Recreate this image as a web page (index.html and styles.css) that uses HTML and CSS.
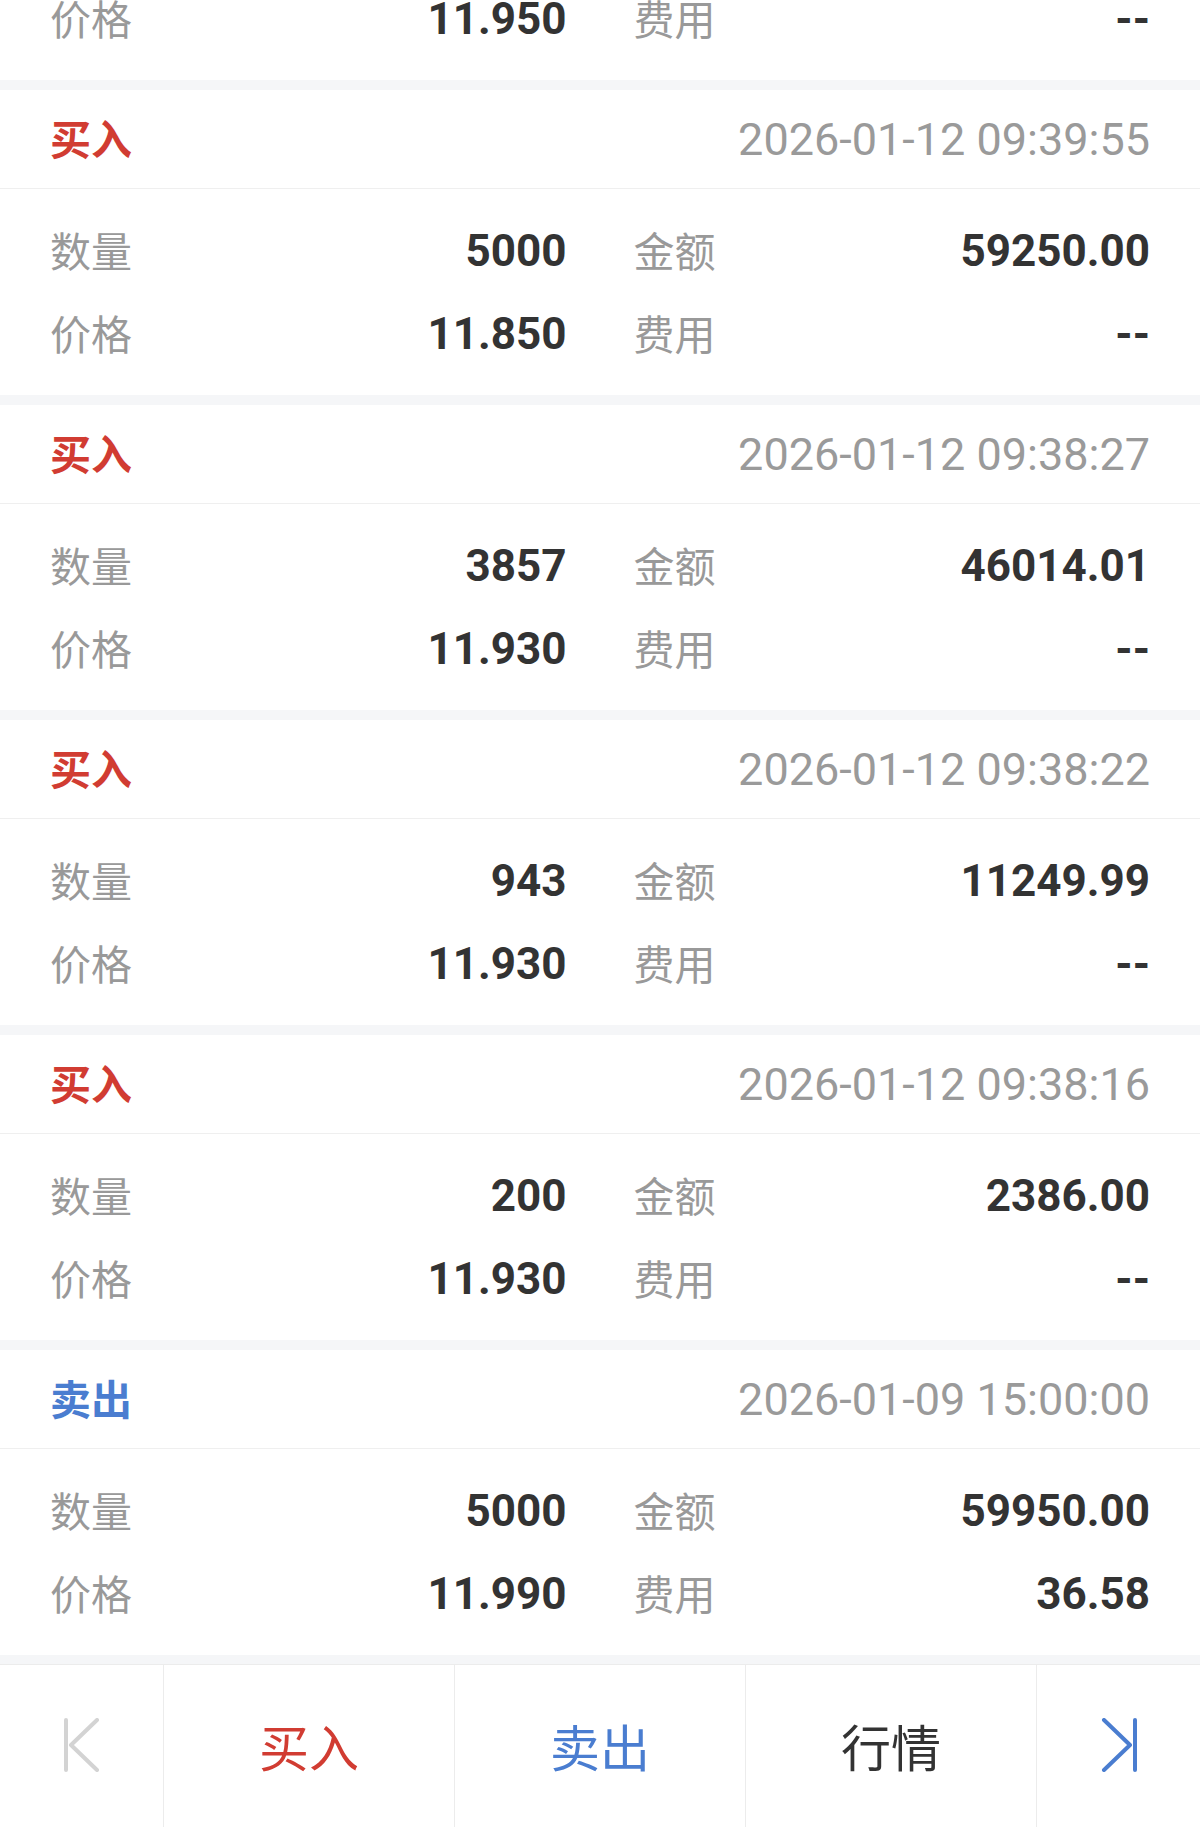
FILE: index.html
```html
<!DOCTYPE html>
<html lang="zh-CN">
<head>
<meta charset="utf-8">
<title>成交明细</title>
<link rel="stylesheet" href="styles.css">
</head>
<body>
<div class="viewport">
  <div class="list">
    <section class="card card-first">
      <div class="card-body card-body-partial">
        <div class="cell"><span class="label">价格</span><span class="value">11.950</span></div>
        <div class="cell"><span class="label">费用</span><span class="value">--</span></div>
      </div>
    </section>
    <section class="card">
      <div class="card-head"><span class="side buy">买入</span><span class="time">2026-01-12 09:39:55</span></div>
      <div class="card-body">
        <div class="cell"><span class="label">数量</span><span class="value">5000</span></div>
        <div class="cell"><span class="label">金额</span><span class="value">59250.00</span></div>
        <div class="cell"><span class="label">价格</span><span class="value">11.850</span></div>
        <div class="cell"><span class="label">费用</span><span class="value">--</span></div>
      </div>
    </section>
    <section class="card">
      <div class="card-head"><span class="side buy">买入</span><span class="time">2026-01-12 09:38:27</span></div>
      <div class="card-body">
        <div class="cell"><span class="label">数量</span><span class="value">3857</span></div>
        <div class="cell"><span class="label">金额</span><span class="value">46014.01</span></div>
        <div class="cell"><span class="label">价格</span><span class="value">11.930</span></div>
        <div class="cell"><span class="label">费用</span><span class="value">--</span></div>
      </div>
    </section>
    <section class="card">
      <div class="card-head"><span class="side buy">买入</span><span class="time">2026-01-12 09:38:22</span></div>
      <div class="card-body">
        <div class="cell"><span class="label">数量</span><span class="value">943</span></div>
        <div class="cell"><span class="label">金额</span><span class="value">11249.99</span></div>
        <div class="cell"><span class="label">价格</span><span class="value">11.930</span></div>
        <div class="cell"><span class="label">费用</span><span class="value">--</span></div>
      </div>
    </section>
    <section class="card">
      <div class="card-head"><span class="side buy">买入</span><span class="time">2026-01-12 09:38:16</span></div>
      <div class="card-body">
        <div class="cell"><span class="label">数量</span><span class="value">200</span></div>
        <div class="cell"><span class="label">金额</span><span class="value">2386.00</span></div>
        <div class="cell"><span class="label">价格</span><span class="value">11.930</span></div>
        <div class="cell"><span class="label">费用</span><span class="value">--</span></div>
      </div>
    </section>
    <section class="card">
      <div class="card-head"><span class="side sell">卖出</span><span class="time">2026-01-09 15:00:00</span></div>
      <div class="card-body">
        <div class="cell"><span class="label">数量</span><span class="value">5000</span></div>
        <div class="cell"><span class="label">金额</span><span class="value">59950.00</span></div>
        <div class="cell"><span class="label">价格</span><span class="value">11.990</span></div>
        <div class="cell"><span class="label">费用</span><span class="value">36.58</span></div>
      </div>
    </section>
  </div>
  <nav class="tabbar">
    <div class="tab tab-icon">
      <svg class="icon" width="40" height="54" viewBox="0 0 40 54"><path d="M4 2V52M35 2L9 27L35 52" fill="none" stroke="#d3d3d3" stroke-width="4" stroke-linecap="round" stroke-linejoin="round"/></svg>
    </div>
    <div class="tab tab-buy">买入</div>
    <div class="tab tab-sell">卖出</div>
    <div class="tab tab-quote">行情</div>
    <div class="tab tab-icon">
      <svg class="icon" width="40" height="54" viewBox="0 0 40 54"><path d="M36 2V52M5 2L31 27L5 52" fill="none" stroke="#4a7dd0" stroke-width="4" stroke-linecap="round" stroke-linejoin="round"/></svg>
    </div>
  </nav>
</div>
</body>
</html>
```
FILE: styles.css
```css
* { box-sizing: border-box; }
html, body { margin: 0; padding: 0; }
body {
  background: #f5f6f8;
  font-family: "Noto Sans CJK SC", sans-serif;
  width: 1200px;
  height: 1827px;
  overflow: hidden;
}
.viewport {
  display: flex;
  flex-direction: column;
  height: 1827px;
  overflow: hidden;
}
.list {
  display: flex;
  flex-direction: column;
  gap: 10px;
}
.card {
  background: #ffffff;
}
.card-first {
  margin-top: -23px;
}
.card-head {
  height: 99px;
  padding: 0 50px 3px;
  display: flex;
  align-items: center;
  justify-content: space-between;
  border-bottom: 1px solid #efefef;
}
.side {
  font-family: "Noto Sans CJK SC", sans-serif;
  font-size: 41px;
  font-weight: 700;
  line-height: 1;
}
.side.buy { color: #d13c32; }
.side.sell { color: #4a7dd0; }
.time {
  font-family: Roboto, "Noto Sans CJK SC", sans-serif;
  font-size: 45px;
  color: #9a9a9a;
  line-height: 1;
  margin-top: 3px;
}
.card-body {
  padding: 20px 50px;
  display: grid;
  grid-template-columns: 1fr 1fr;
  grid-auto-rows: 83px;
  column-gap: 67px;
}
.card-body-partial {
  padding-top: 0;
}
.cell {
  display: flex;
  align-items: center;
  justify-content: space-between;
}
.label {
  font-family: "Noto Sans CJK SC", sans-serif;
  font-size: 41px;
  color: #999999;
  line-height: 1;
  margin-bottom: 2px;
}
.value {
  font-family: Roboto, sans-serif;
  font-size: 44px;
  font-weight: 700;
  color: #333333;
  line-height: 1;
}
.tabbar {
  margin-top: 9px;
  height: 163px;
  flex: none;
  background: #ffffff;
  border-top: 1px solid #ececec;
  display: grid;
  grid-template-columns: 163px 1fr 1fr 1fr 164px;
}
.tab {
  display: flex;
  align-items: center;
  justify-content: center;
  font-family: "Noto Sans CJK SC", sans-serif;
  font-size: 50px;
  line-height: 1;
  border-left: 1px solid #ececec;
  padding-bottom: 2px;
}
.tab:first-child { border-left: none; }
.tab-buy { color: #d13c32; }
.tab-sell { color: #4a7dd0; }
.tab-quote { color: #333333; }
.icon { display: block; }
```
